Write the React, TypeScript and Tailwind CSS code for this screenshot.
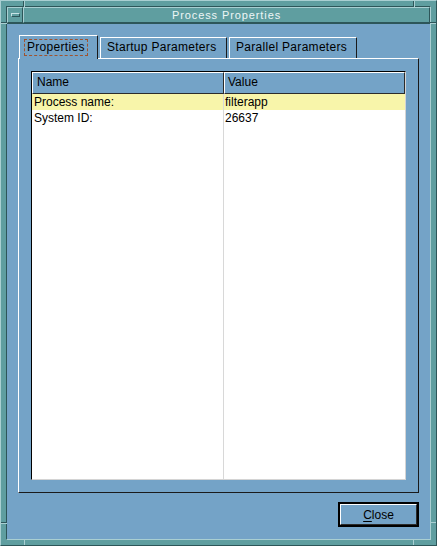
import React from "react"

const font = { fontFamily: '"Liberation Sans", Arial, sans-serif' }

function Tab({ label, active, width }: { label: string; active?: boolean; width: string }) {
  if (active) {
    return (
      <div
        className={
          width +
          " h-[24px] border-l border-t border-white border-r border-r-[#1a1a1a] pl-[5px] pt-[2px] bg-[#74a3c7] -mb-[1px] relative z-10 tracking-[0.3px]"
        }
      >
        <span className="inline-block px-[2px] leading-[15px] outline-1 outline-dashed outline-[#a0522d]">
          {label}
        </span>
      </div>
    )
  }
  return (
    <div
      className={
        width +
        " h-[21px] border-l border-t border-white border-r border-r-[#1a1a1a] pl-[6px] pt-[1px] leading-[16px] bg-[#74a3c7] tracking-[0.3px]"
      }
    >
      {label}
    </div>
  )
}

export default function App() {
  return (
    <div
      className="w-[437px] h-[546px] bg-[#5f9ea0] border-l border-t border-l-[#a9cfd2] border-t-[#a9cfd2] border-r border-b border-r-[#2d5659] border-b-[#2d5659] p-[5px] relative"
      style={font}
    >
      {/* frame corner ticks */}
      <div className="absolute left-0 top-[21px] w-[6px] h-[1px] bg-[#2d5659]" />
      <div className="absolute left-0 top-[22px] w-[6px] h-[1px] bg-[#a9cfd2]" />
      <div className="absolute left-[22px] top-0 w-[1px] h-[6px] bg-[#2d5659]" />
      <div className="absolute left-[23px] top-0 w-[1px] h-[6px] bg-[#a9cfd2]" />
      <div className="absolute right-[22px] top-0 w-[1px] h-[6px] bg-[#2d5659]" />
      <div className="absolute right-[21px] top-0 w-[1px] h-[6px] bg-[#a9cfd2]" />
      <div className="absolute right-0 top-[21px] w-[6px] h-[1px] bg-[#2d5659]" />
      <div className="absolute right-0 top-[22px] w-[6px] h-[1px] bg-[#a9cfd2]" />
      <div className="absolute left-0 bottom-[22px] w-[6px] h-[1px] bg-[#2d5659]" />
      <div className="absolute left-0 bottom-[21px] w-[6px] h-[1px] bg-[#a9cfd2]" />
      <div className="absolute left-[23px] bottom-0 w-[1px] h-[6px] bg-[#a9cfd2]" />
      <div className="absolute right-[22px] bottom-0 w-[1px] h-[6px] bg-[#a9cfd2]" />
      <div className="absolute right-0 bottom-[22px] w-[6px] h-[1px] bg-[#a9cfd2]" />

      <div className="h-full flex flex-col border-l border-t border-l-[#2d5659] border-t-[#2d5659] border-r border-b border-r-[#a9cfd2] border-b-[#a9cfd2]">
        {/* title bar */}
        <div className="h-[17px] flex border-b border-b-[#2d5659]">
          <div className="w-[16px] h-[16px] border-l border-t border-[#a9cfd2] border-r border-b border-r-[#2d5659] border-b-[#2d5659] flex items-center justify-center">
            <div className="w-[9px] h-[4px] border border-t-[#c7e3e5] border-l-[#c7e3e5] border-r-[#2d5659] border-b-[#2d5659] bg-[#5f9ea0]" />
          </div>
          <div className="flex-1 h-[16px] border-l border-t border-[#a9cfd2] border-r border-b border-r-[#2d5659] border-b-[#2d5659] flex items-center justify-center text-[11px] text-[#eef6f6] tracking-[0.9px]">
            Process Properties
          </div>
        </div>

        {/* client */}
        <div className="flex-1 bg-[#74a3c7] flex flex-col px-[11px] pt-[11px] pb-[11px] text-[12px] text-black">
          <div className="flex items-end h-[23px] pl-[1px] gap-[2px]">
            <Tab label="Properties" active width="w-[79px]" />
            <Tab label="Startup Parameters" width="w-[127px]" />
            <Tab label="Parallel Parameters" width="w-[128px]" />
          </div>
          <div className="h-[435px] border-l border-t border-white border-r border-b border-r-[#1a1a1a] border-b-[#1a1a1a] px-[12px] pt-[12px] pb-[12px]">
            <div className="h-full bg-white border-l border-t border-l-black border-t-black border-r border-b border-r-[#d4d4d4] border-b-[#d4d4d4] flex flex-col">
              <div className="flex h-[22px] bg-[#74a3c7]">
                <div className="w-[192px] border-l border-t border-white border-r border-b border-r-[#2b2b2b] border-b-[#2b2b2b] pl-[4px] leading-[19px]">
                  Name
                </div>
                <div className="flex-1 border-l border-t border-white border-r border-b border-r-[#2b2b2b] border-b-[#2b2b2b] pl-[3px] leading-[19px]">
                  Value
                </div>
              </div>
              <div className="flex-1 relative">
                <div className="absolute left-[191px] top-0 bottom-0 w-[1px] bg-[#d8d8d8]" />
                <div className="flex h-[16px] bg-[#f8f5aa] leading-[16px]">
                  <div className="w-[192px] pl-[2px]">Process name:</div>
                  <div className="flex-1 pl-[1px]">filterapp</div>
                </div>
                <div className="flex h-[16px] leading-[16px]">
                  <div className="w-[192px] pl-[2px]">System ID:</div>
                  <div className="flex-1 pl-[1px]">26637</div>
                </div>
              </div>
            </div>
          </div>
          <div className="flex justify-end mt-[9px]">
            <div className="w-[81px] h-[25px] border-2 border-black">
              <div className="h-full border-l border-t border-white border-r border-b border-r-[#2b2b2b] border-b-[#2b2b2b] flex items-center justify-center">
                <span>
                  <span className="underline underline-offset-2">C</span>lose
                </span>
              </div>
            </div>
          </div>
        </div>
      </div>
    </div>
  )
}
